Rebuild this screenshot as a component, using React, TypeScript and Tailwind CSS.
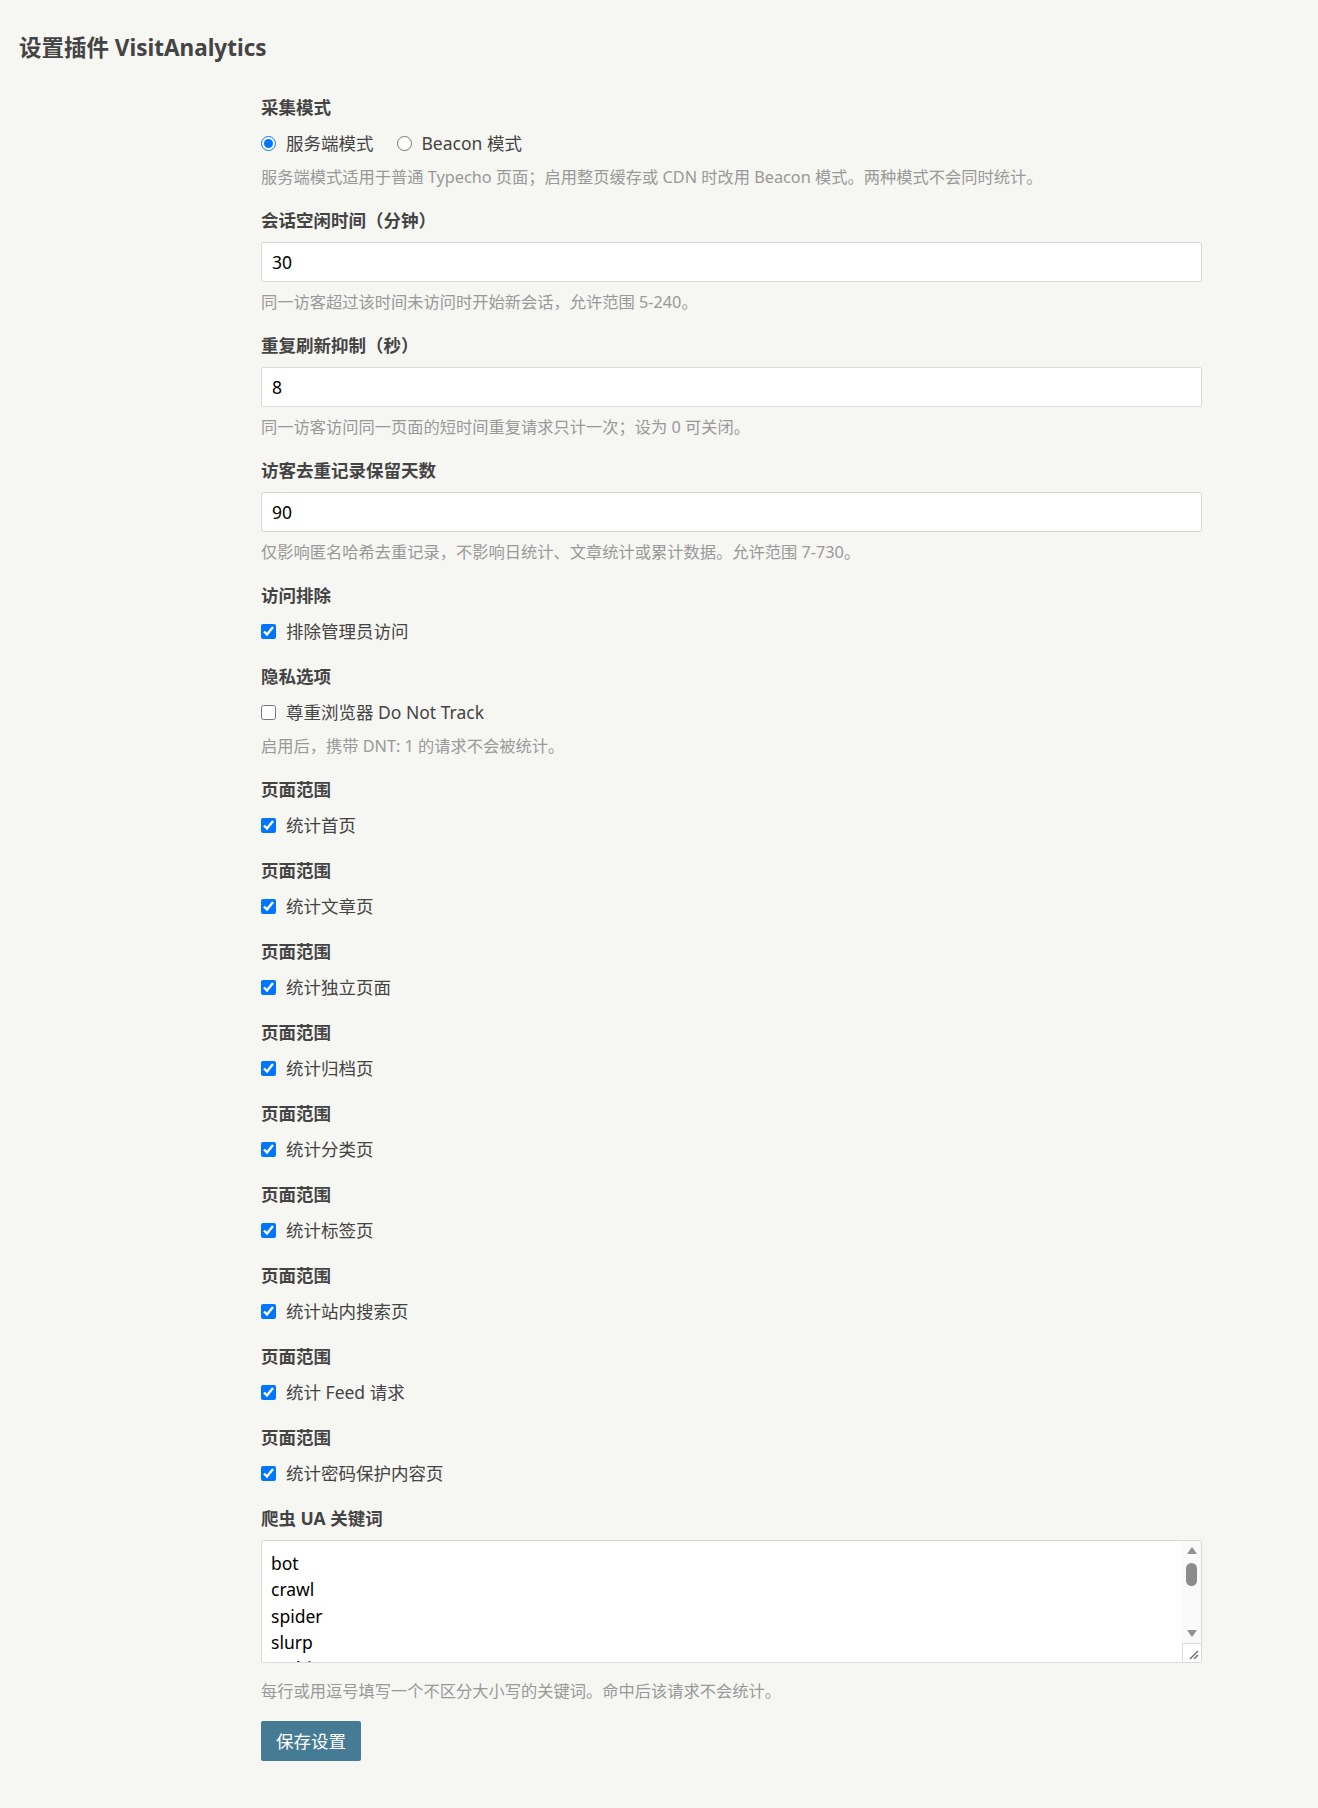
import { useState } from "react";

// label above each option
const Label = ({ text }: { text: string }) => (
  <div className="text-[17.5px] leading-[26px] font-bold text-[#444]">{text}</div>
);

const Desc = ({ text, className = "mt-[8px]" }: { text: string; className?: string }) => (
  <div className={`text-[16.25px] leading-[24px] text-[#999] ${className}`}>{text}</div>
);

const NumberField = ({ label, value, desc }: { label: string; value: string; desc: string }) => {
  const [v, setV] = useState<string>(value);
  return (
    <div className="mt-[18px]">
      <Label text={label} />
      <input
        className="mt-[9px] block w-full h-[40px] px-[10px] bg-white border border-[#D9D9D6] rounded-[2px] text-[17.5px] text-black outline-none"
        value={v}
        onChange={(e) => setV(e.target.value)}
      />
      <Desc text={desc} />
    </div>
  );
};

const CheckField = ({
  label,
  text,
  checked,
  desc,
  first,
}: {
  label: string;
  text: string;
  checked: boolean;
  desc?: string;
  first?: boolean;
}) => {
  const [on, setOn] = useState<boolean>(checked);
  return (
    <div className={first ? "" : "mt-[18px]"}>
      <Label text={label} />
      <label className="mt-[10px] flex items-center gap-[10px] h-[27px] text-[17.5px] text-[#444]">
        <input
          type="checkbox"
          className="w-[15px] h-[15px] m-0"
          checked={on}
          onChange={() => setOn(!on)}
        />
        <span>{text}</span>
      </label>
      {desc && <Desc text={desc} />}
    </div>
  );
};

const pages = [
  "统计首页",
  "统计文章页",
  "统计独立页面",
  "统计归档页",
  "统计分类页",
  "统计标签页",
  "统计站内搜索页",
  "统计 Feed 请求",
  "统计密码保护内容页",
];

const keywords = [
  "bot",
  "crawl",
  "spider",
  "slurp",
  "archiver",
  "facebookexternalhit",
  "curl",
  "wget",
  "python",
  "headless",
  "lighthouse",
  "preview",
  "scrapy",
].join("\n");

// the textarea's scrollbar, drawn over its right edge
const FakeScrollbar = () => (
  <>
    <div className="absolute top-[1px] right-[1px] w-[19px] h-[102px] bg-[#FAFAFA] flex flex-col items-center pointer-events-none">
      <div className="h-[19px] flex items-center justify-center">
        <svg width="10" height="7" viewBox="0 0 10 7">
          <path d="M5 0 L10 7 L0 7 Z" fill="#8F8F8F" />
        </svg>
      </div>
      <div className="mt-[3px] w-[11px] h-[23px] rounded-full bg-[#8C8C8C]" />
      <div className="flex-1" />
      <div className="h-[19px] flex items-center justify-center">
        <svg width="10" height="7" viewBox="0 0 10 7">
          <path d="M0 0 L10 0 L5 7 Z" fill="#8F8F8F" />
        </svg>
      </div>
    </div>
    <div className="absolute bottom-[1px] right-[1px] w-[19px] h-[19px] bg-white border-l border-t border-[#DCDCDC] pointer-events-none">
      <svg width="18" height="18" viewBox="0 0 18 18">
        <path d="M7 15 L15 7" stroke="#666" strokeWidth="1.2" />
        <path d="M11 15 L15 11" stroke="#666" strokeWidth="1.2" />
      </svg>
    </div>
  </>
);

const App = () => {
  const [mode, setMode] = useState<string>("server");

  return (
    <div className="min-h-screen bg-[#F6F6F3] font-['Noto_Sans','Noto_Sans_CJK_SC',sans-serif] pb-[47px]">
      <h2 className="pt-[33px] pl-[19px] text-[22.5px] leading-[30px] font-bold text-[#444]">
        设置插件 VisitAnalytics
      </h2>

      <form className="ml-[261px] w-[941px] mt-[31px]" onSubmit={(e) => e.preventDefault()}>
        {/* collect mode */}
        <div>
          <Label text="采集模式" />
          <div className="mt-[10px] flex items-center h-[27px] text-[17.5px] text-[#444]">
            <label className="flex items-center gap-[10px]">
              <input
                type="radio"
                name="mode"
                className="w-[15px] h-[15px] m-0"
                checked={mode === "server"}
                onChange={() => setMode("server")}
              />
              <span>服务端模式</span>
            </label>
            <label className="flex items-center gap-[10px] ml-[23px]">
              <input
                type="radio"
                name="mode"
                className="w-[15px] h-[15px] m-0"
                checked={mode === "beacon"}
                onChange={() => setMode("beacon")}
              />
              <span>Beacon 模式</span>
            </label>
          </div>
          <Desc text="服务端模式适用于普通 Typecho 页面；启用整页缓存或 CDN 时改用 Beacon 模式。两种模式不会同时统计。" />
        </div>

        <NumberField
          label="会话空闲时间（分钟）"
          value="30"
          desc="同一访客超过该时间未访问时开始新会话，允许范围 5-240。"
        />
        <NumberField
          label="重复刷新抑制（秒）"
          value="8"
          desc="同一访客访问同一页面的短时间重复请求只计一次；设为 0 可关闭。"
        />
        <NumberField
          label="访客去重记录保留天数"
          value="90"
          desc="仅影响匿名哈希去重记录，不影响日统计、文章统计或累计数据。允许范围 7-730。"
        />

        <div className="mt-[18px]">
          <CheckField first label="访问排除" text="排除管理员访问" checked={true} />
        </div>
        <CheckField
          label="隐私选项"
          text="尊重浏览器 Do Not Track"
          checked={false}
          desc="启用后，携带 DNT: 1 的请求不会被统计。"
        />

        {pages.map((p) => (
          <CheckField key={p} label="页面范围" text={p} checked={true} />
        ))}

        {/* crawler keywords */}
        <div className="mt-[18px]">
          <Label text="爬虫 UA 关键词" />
          <div className="relative mt-[9px]">
            <textarea
              className="block w-full h-[123px] pl-[9px] pr-[24px] py-[9px] bg-white border border-[#D9D9D6] rounded-[2px] text-[17.5px] leading-[26.25px] text-black outline-none resize-none [scrollbar-width:none]"
              defaultValue={keywords}
            />
            <FakeScrollbar />
          </div>
          <Desc className="mt-[16px]" text="每行或用逗号填写一个不区分大小写的关键词。命中后该请求不会统计。" />
        </div>

        <button
          type="submit"
          className="mt-[18px] h-[40px] px-[15px] bg-[#467B96] text-white text-[17.5px] rounded-[2px]"
        >
          保存设置
        </button>
      </form>
    </div>
  );
};
export default App;
